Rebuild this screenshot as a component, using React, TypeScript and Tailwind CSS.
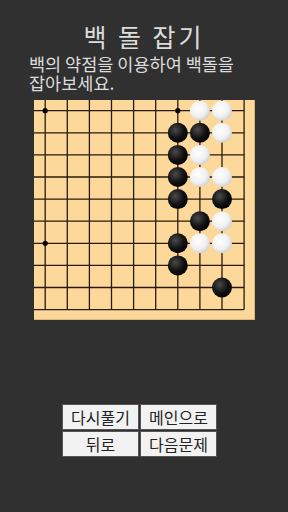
import React from "react";

type Stone = { x: number; y: number; c: "b" | "w" };

// 보드 일부(우하단) - 좌표는 열/행 인덱스
const stones: Stone[] = [
  { x: 7, y: 0, c: "w" },
  { x: 8, y: 0, c: "w" },
  { x: 6, y: 1, c: "b" },
  { x: 7, y: 1, c: "b" },
  { x: 8, y: 1, c: "w" },
  { x: 6, y: 2, c: "b" },
  { x: 7, y: 2, c: "w" },
  { x: 6, y: 3, c: "b" },
  { x: 7, y: 3, c: "w" },
  { x: 8, y: 3, c: "w" },
  { x: 6, y: 4, c: "b" },
  { x: 8, y: 4, c: "b" },
  { x: 7, y: 5, c: "b" },
  { x: 8, y: 5, c: "w" },
  { x: 6, y: 6, c: "b" },
  { x: 7, y: 6, c: "w" },
  { x: 8, y: 6, c: "w" },
  { x: 6, y: 7, c: "b" },
  { x: 8, y: 8, c: "b" },
];

const stars = [
  [0, 0],
  [6, 0],
  [0, 6],
];

const X0 = 11.2;
const Y0 = 10.7;
const GAP = 22.1;
const px = (i: number) => X0 + GAP * i;
const py = (j: number) => Y0 + GAP * j;

const Board = () => {
  const lastX = px(9);
  const lastY = py(9);
  return (
    <div className="ml-[34px] w-[221px] h-[220px] bg-[#fcd99b] border-r border-b border-[#d9b878]">
      <svg width="220" height="219" viewBox="0 0 220 219">
        <defs>
          <radialGradient id="bg" cx="0.38" cy="0.35" r="0.7">
            <stop offset="0" stopColor="#4a4a4a" />
            <stop offset="0.6" stopColor="#111" />
            <stop offset="1" stopColor="#000" />
          </radialGradient>
          <radialGradient id="wg" cx="0.4" cy="0.38" r="0.7">
            <stop offset="0" stopColor="#ffffff" />
            <stop offset="0.6" stopColor="#f0f0f0" />
            <stop offset="1" stopColor="#c8c8c8" />
          </radialGradient>
        </defs>
        {Array.from({ length: 10 }).map((_, i) => (
          <line key={"h" + i} x1={0} y1={py(i)} x2={lastX} y2={py(i)} stroke="#2a1a0a" strokeWidth="1.3" />
        ))}
        {Array.from({ length: 10 }).map((_, i) => (
          <line key={"v" + i} x1={px(i)} y1={0} x2={px(i)} y2={lastY} stroke="#2a1a0a" strokeWidth="1.3" />
        ))}
        {stars.map(([i, j]) => (
          <circle key={`s${i}-${j}`} cx={px(i)} cy={py(j)} r="2.6" fill="#000" />
        ))}
        {stones.map((s) => (
          <circle
            key={`${s.x}-${s.y}`}
            cx={px(s.x)}
            cy={py(s.y)}
            r="10"
            fill={s.c === "b" ? "url(#bg)" : "url(#wg)"}
          />
        ))}
      </svg>
    </div>
  );
};

const App = () => {
  return (
    <div
      className="w-[288px] h-[512px] bg-[#303030] flex flex-col"
      style={{ fontFamily: '"Noto Sans CJK KR", "Noto Sans", sans-serif' }}
    >
      <h1 className="mt-[20px] text-center text-[25px] leading-[32px] text-[#dcdcdc] tracking-[3px]">
        백 돌 잡기
      </h1>
      <p className="px-[29px] mt-[2px] text-[17.5px] leading-[19px] text-[#dcdcdc] break-keep">
        백의 약점을 이용하여 백돌을 잡아보세요.
      </p>
      <div className="mt-[8px]">
        <Board />
      </div>
      <div className="mt-[84px] ml-[62px] grid grid-cols-[77px_77px] gap-[1px] w-fit">
        {["다시풀기", "메인으로", "뒤로", "다음문제"].map((t) => (
          <button
            key={t}
            className="h-[26px] bg-[#f2f2f2] text-[#222] text-[16px] leading-[24px] text-center border border-[#555]"
          >
            {t}
          </button>
        ))}
      </div>
    </div>
  );
};

export default App;
